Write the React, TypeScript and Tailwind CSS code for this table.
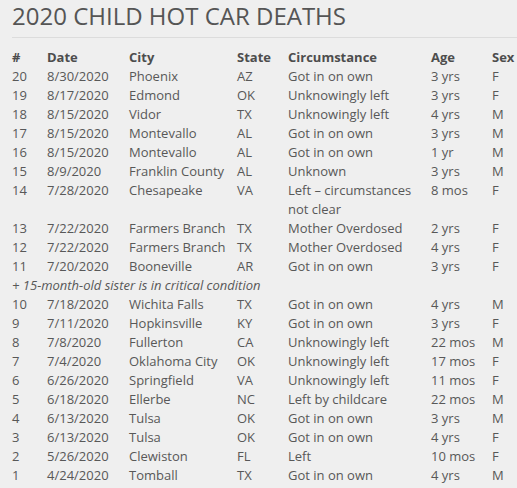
const rows: [string, string, string, string, string, string, string][] = [
  ['20', '8/30/2020', 'Phoenix', 'AZ', 'Got in on own', '3 yrs', 'F'],
  ['19', '8/17/2020', 'Edmond', 'OK', 'Unknowingly left', '3 yrs', 'F'],
  ['18', '8/15/2020', 'Vidor', 'TX', 'Unknowingly left', '4 yrs', 'M'],
  ['17', '8/15/2020', 'Montevallo', 'AL', 'Got in on own', '3 yrs', 'M'],
  ['16', '8/15/2020', 'Montevallo', 'AL', 'Got in on own', '1 yr', 'M'],
  ['15', '8/9/2020', 'Franklin County', 'AL', 'Unknown', '3 yrs', 'M'],
  ['14', '7/28/2020', 'Chesapeake', 'VA', 'Left – circumstances not clear', '8 mos', 'F'],
  ['13', '7/22/2020', 'Farmers Branch', 'TX', 'Mother Overdosed', '2 yrs', 'F'],
  ['12', '7/22/2020', 'Farmers Branch', 'TX', 'Mother Overdosed', '4 yrs', 'F'],
  ['11', '7/20/2020', 'Booneville', 'AR', 'Got in on own', '3 yrs', 'F'],
  ['10', '7/18/2020', 'Wichita Falls', 'TX', 'Got in on own', '4 yrs', 'M'],
  ['9', '7/11/2020', 'Hopkinsville', 'KY', 'Got in on own', '3 yrs', 'F'],
  ['8', '7/8/2020', 'Fullerton', 'CA', 'Unknowingly left', '22 mos', 'M'],
  ['7', '7/4/2020', 'Oklahoma City', 'OK', 'Unknowingly left', '17 mos', 'F'],
  ['6', '6/26/2020', 'Springfield', 'VA', 'Unknowingly left', '11 mos', 'F'],
  ['5', '6/18/2020', 'Ellerbe', 'NC', 'Left by childcare', '22 mos', 'M'],
  ['4', '6/13/2020', 'Tulsa', 'OK', 'Got in on own', '3 yrs', 'M'],
  ['3', '6/13/2020', 'Tulsa', 'OK', 'Got in on own', '4 yrs', 'F'],
  ['2', '5/26/2020', 'Clewiston', 'FL', 'Left', '10 mos', 'F'],
  ['1', '4/24/2020', 'Tomball', 'TX', 'Got in on own', '4 yrs', 'M'],
];

const cols = 'grid grid-cols-[35px_82px_108px_51px_143px_61px_1fr]';

export default function App() {
  return (
    <div className="min-h-[488px] w-[517px] overflow-hidden bg-[#efefef] pl-3 pt-px text-[#585858] font-['Open_Sans',sans-serif]">
      <h1 className="text-[24px] leading-[30px] text-[#555]">2020 CHILD HOT CAR DEATHS</h1>
      <div className="mt-[6px] border-b border-[#dcdcdc]" />

      <div className="mt-[10px] text-[13px] leading-[19px]">
        {/* Header */}
        <div className={`${cols} font-bold text-[#4d4d4d]`}>
          <div>#</div>
          <div>Date</div>
          <div>City</div>
          <div>State</div>
          <div>Circumstance</div>
          <div>Age</div>
          <div>Sex</div>
        </div>

        {rows.map((r) => (
          <div key={r[0]}>
            <div className={cols}>
              {r.map((c, i) => (
                <div key={i} className={i === 4 ? 'pr-2' : 'whitespace-nowrap'}>
                  {c}
                </div>
              ))}
            </div>
            {r[0] === '11' && (
              <div className="italic">+ 15-month-old sister is in critical condition</div>
            )}
          </div>
        ))}
      </div>
    </div>
  );
}
